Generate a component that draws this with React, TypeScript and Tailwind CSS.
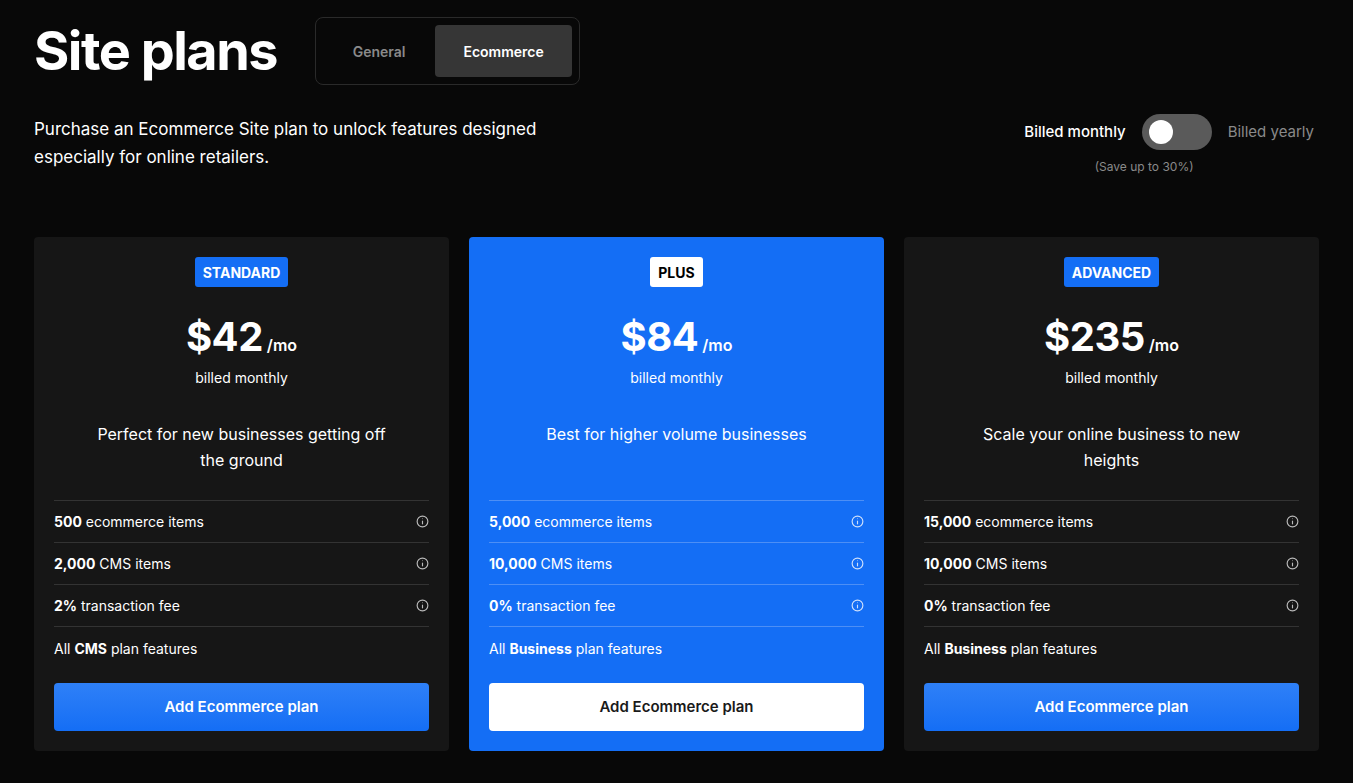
import React from "react";

const Info = ({ c }: { c: string }) => (
  <svg width="13" height="13" viewBox="0 0 16 16" fill="none" stroke={c} strokeWidth="1.4">
    <circle cx="8" cy="8" r="6.6" />
    <line x1="8" y1="7" x2="8" y2="11.5" />
    <circle cx="8" cy="4.7" r="0.6" fill={c} stroke="none" />
  </svg>
);

type Plan = {
  badge: string; price: string; desc: string; feats: [string, string][]; all: string; plus?: boolean;
};

const plans: Plan[] = [
  { badge: "STANDARD", price: "$42", desc: "Perfect for new businesses getting off the ground", feats: [["500", " ecommerce items"], ["2,000", " CMS items"], ["2%", " transaction fee"]], all: "CMS" },
  { badge: "PLUS", price: "$84", desc: "Best for higher volume businesses", feats: [["5,000", " ecommerce items"], ["10,000", " CMS items"], ["0%", " transaction fee"]], all: "Business", plus: true },
  { badge: "ADVANCED", price: "$235", desc: "Scale your online business to new heights", feats: [["15,000", " ecommerce items"], ["10,000", " CMS items"], ["0%", " transaction fee"]], all: "Business" },
];

function Card({ p }: { p: Plan }) {
  const line = p.plus ? "border-[#4d8ff5]" : "border-[#333333]";
  return (
    <div className={`flex flex-col rounded-[4px] px-5 pt-5 pb-5 ${p.plus ? "bg-[#146ef5]" : "bg-[#161616]"}`}>
      <div className="flex justify-center">
        <span className={`rounded-[3px] px-2 h-[30px] flex items-center text-[14px] font-bold ${p.plus ? "bg-white text-black" : "bg-[#146ef5] text-white"}`}>{p.badge}</span>
      </div>
      <div className="flex justify-center items-baseline mt-[26px]">
        <span className="text-[40px] font-bold leading-[48px] tracking-[-0.5px]">{p.price}</span>
        <span className="text-[16px] font-semibold ml-1">/mo</span>
      </div>
      <div className="text-center text-[14px] mt-[6px]">billed monthly</div>
      <div className="text-center text-[16px] leading-[26px] mt-[33px] mx-auto w-[290px]">{p.desc}</div>
      <div className="flex-1" />
      <div className={`border-t ${line}`}>
        {p.feats.map(([b, t], i) => (
          <div key={i} className={`flex items-center justify-between h-[42px] border-b ${line} text-[14px]`}>
            <span><b className="font-bold">{b}</b>{t}</span>
            <Info c={p.plus ? "#cfe0fb" : "#bbbbbb"} />
          </div>
        ))}
        <div className="h-[42px] flex items-center text-[14px]">All&nbsp;<b className="font-bold">{p.all}</b>&nbsp;plan features</div>
      </div>
      <button className={`mt-[14px] h-[48px] rounded-[4px] text-[15px] font-semibold ${p.plus ? "bg-white text-[#1a1a1a] font-medium" : "bg-gradient-to-b from-[#2e80f7] to-[#146ef5] text-white"}`}>Add Ecommerce plan</button>
    </div>
  );
}

export default function App() {
  return (
    <div className="min-h-[783px] bg-[#080808] text-white px-[34px] pt-[17px]" style={{ fontFamily: "Inter, 'Noto Sans', sans-serif" }}>
      <div className="flex items-center">
        <h1 className="text-[54px] font-bold tracking-[-1.5px] leading-[68px]">Site plans</h1>
        <div className="ml-[38px] flex rounded-[8px] border border-[#2a2a2a] p-[7px] h-[68px]">
          <div className="w-[112px] flex items-center justify-center text-[14px] font-semibold text-[#8a8a8a]">General</div>
          <div className="w-[137px] flex items-center justify-center text-[14px] font-semibold bg-[#363636] rounded-[4px]">Ecommerce</div>
        </div>
      </div>
      <div className="flex justify-between mt-[30px]">
        <p className="text-[17px] leading-[28px] w-[560px]">Purchase an Ecommerce Site plan to unlock features designed especially for online retailers.</p>
        <div className="flex flex-col items-center mt-[-1px] mr-[5px]">
          <div className="flex items-center gap-4">
            <span className="text-[15px] font-medium">Billed monthly</span>
            <div className="w-[70px] h-[36px] rounded-full bg-[#5a5a5a] flex items-center px-[7px]">
              <div className="w-[24px] h-[24px] rounded-full bg-white" />
            </div>
            <span className="text-[15px] text-[#8a8a8a]">Billed yearly</span>
          </div>
          <span className="text-[12px] text-[#8a8a8a] mt-[8px] mr-[50px]">(Save up to 30%)</span>
        </div>
      </div>
      <div className="grid grid-cols-3 gap-5 mt-[61px] h-[514px]">
        {plans.map((p) => <Card key={p.badge} p={p} />)}
      </div>
    </div>
  );
}
